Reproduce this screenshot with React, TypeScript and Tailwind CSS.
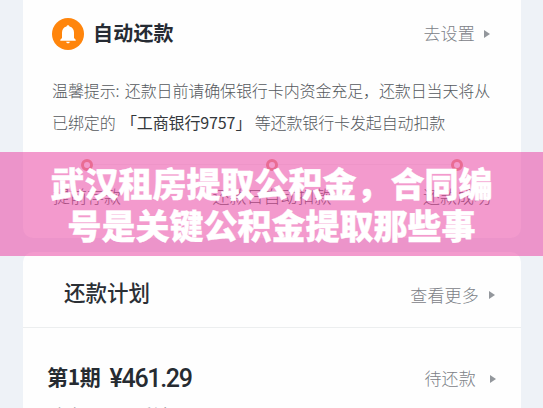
import React from 'react';

const steps = ['提前存款', '还款日自动扣款', '还款成功'];

const BellIcon: React.FC = () => (
    <svg viewBox="0 0 32 32" className="h-8 w-8 shrink-0">
        <circle cx="16" cy="16" r="16" fill="#ff850c" />
        <path d="M16 7.2c.9 0 1.400.6 1.500 1.300 3 .7 4.500 3 4.500 6v5.500l1.700 1.800v.9H8.300v-.9l1.700-1.800v-5.500c0-3 1.500-5.300 4.500-6 .1-.7.6-1.300 1.500-1.300z" fill="#fff" />
        <path d="M14.200 23.700h3.600c-.2 1-.9 1.500-1.800 1.500s-1.600-.5-1.800-1.500z" fill="#fff" />
    </svg>
);

const Arrow: React.FC = () => (
    <svg viewBox="0 0 6 8" className="h-2 w-1.5 shrink-0">
        <path d="M0 0l6 4-6 4z" fill="#93979c" />
    </svg>
);

const AutoRepayCard: React.FC = () => (
    <section className="h-[238px] rounded-b-[10px] bg-[#fefefe]">
        <div className="flex h-[68px] items-center pl-[29px] pr-[31px]">
            <BellIcon />
            <h2 className="-mt-0.5 ml-[9px] text-[20px] font-bold tracking-[0.2px] text-[#262b33]">自动还款</h2>
            <span className="-mt-0.5 ml-auto mr-[9px] text-[17px] font-light tracking-[0.2px] text-[#7c8187]">去设置</span>
            <Arrow />
        </div>
        <p className="mt-1.5 whitespace-nowrap pl-[29px] text-[16px] font-light leading-8 tracking-[-0.12px] text-[#55595d]">
            温馨提示: <span className="ml-0.5">还款日前请确保银行卡内资金充足，还款日当天将从</span>
            <br />
            已绑定的 <span className="ml-0.5 font-normal text-[#33373b]">「工商银行9757」</span> <span className="ml-0">等还款银行卡发起自动扣款</span>
        </p>
        <div className="relative mt-[21px] flex justify-between pl-[30px] pr-[30px]">
            <div className="absolute left-[65px] right-[65px] top-[5px] h-px bg-[#f3f3f3]" />
            {steps.map(step => (
                <div key={step} className="relative flex flex-col items-center">
                    <span className="h-3 w-3 rounded-full border-[3px] border-[#e8967c] bg-white" />
                    <span className="mt-[13px] text-[17px] font-light leading-6 text-[#4f4f4f]">{step}</span>
                </div>
            ))}
        </div>
    </section>
);

const PlanCard: React.FC = () => (
    <section className="mt-[14px] h-[156px] overflow-hidden rounded-t-[10px] bg-[#fefefe]">
        <div className="flex h-[76px] items-center border-b border-[#eceeef] pl-[41px] pr-[26px] pt-[10px]">
            <h2 className="-mt-1 text-[21.5px] font-medium text-[#2b2f35]">还款计划</h2>
            <span className="ml-auto mr-[10px] text-[17px] font-light tracking-[0.2px] text-[#7c8187]">查看更多</span>
            <Arrow />
        </div>
        <div className="flex h-[76px] items-center pl-6 pr-[25px] pt-[25px]">
            <span className="-mt-1 text-[21px] font-bold tracking-[-0.3px] text-[#262b31]">第1期</span>
            <span className="ml-[9px] font-['Roboto',sans-serif] text-[25px] font-medium tracking-[-1.3px] text-[#262b31]">¥461.29</span>
            <span className="-mt-0.5 ml-auto mr-[14px] text-[17px] font-light tracking-[0.2px] text-[#7c8187]">待还款</span>
            <Arrow />
        </div>
        <p className="mt-0.5 whitespace-nowrap pl-[29px] text-[15px] leading-4 text-[#999da1]">本金448.12 + 利息13.17</p>
    </section>
);

const App: React.FC = () => (
    <div className="relative h-[408px] w-[543px] overflow-hidden bg-[#eef2f7] pl-[23px] pr-[22px] font-['Noto_Sans_CJK_SC',sans-serif]">
        <AutoRepayCard />
        <PlanCard />
        <div className="absolute inset-x-0 top-[152px] h-[104px] bg-[#ea4ba6]/56 pt-2.5">
            <h1 className="whitespace-nowrap text-center text-[34px] font-black leading-[42px] text-white [-webkit-text-stroke:0.4px_white]">
                武汉租房提取公积金，合同编
                <br />
                号是关键公积金提取那些事
            </h1>
        </div>
    </div>
);

export default App;
